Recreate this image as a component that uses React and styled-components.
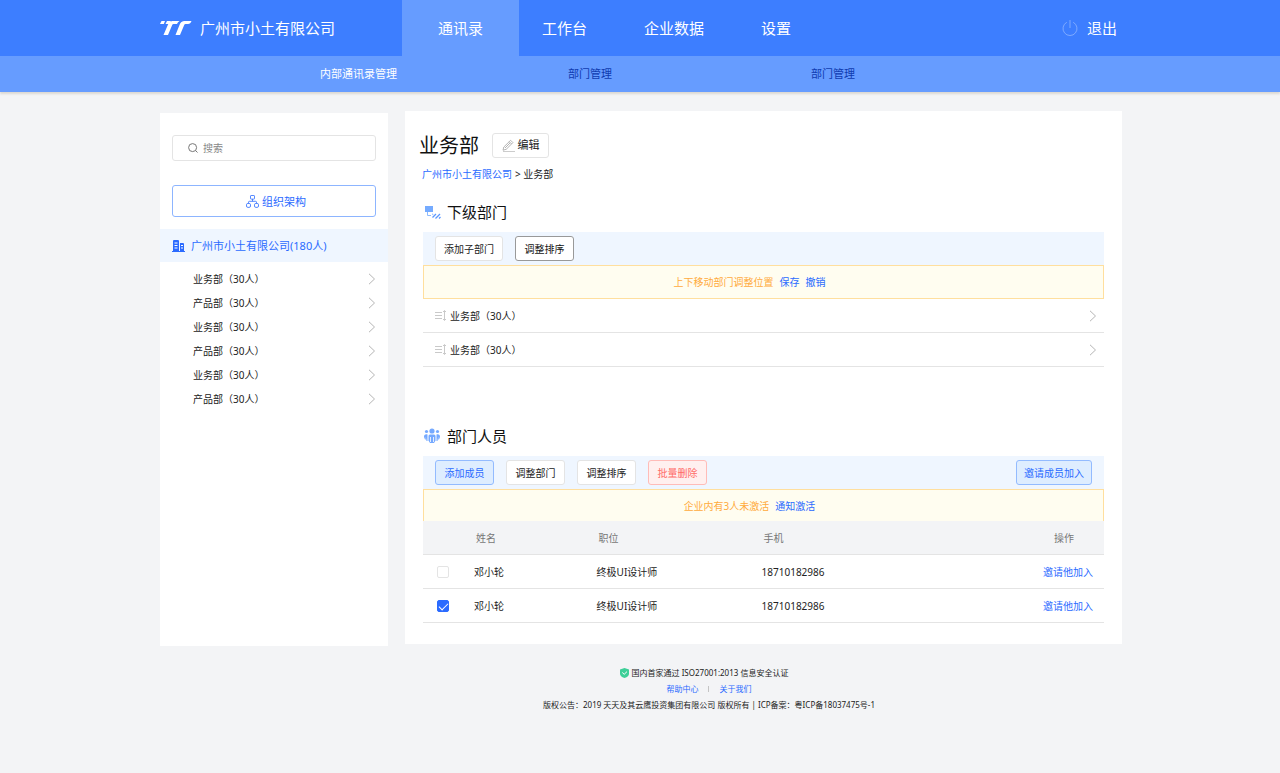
import React from 'react'
import styled, { createGlobalStyle } from 'styled-components'

const colors = {
    white: '#ffffff',
    page: '#f3f4f6',
    primary: '#3d7eff',
    primaryLight: '#669cff',
    link: '#2b6bff',
    navDim: '#0f3bb0',
    pale: '#eff6ff',
    notice: '#fffdf0',
    noticeBorder: '#ffdf9e',
    orange: '#ffab3d',
    text: '#222222',
    muted: '#777777',
    line: '#e4e4e4'
}

const GlobalStyle = createGlobalStyle`
    *{
        box-sizing:border-box;
    }
    body{
        margin:0;
        background:${colors.page};
        color:${colors.text};
        font-family:"Noto Sans", "Noto Sans CJK SC", sans-serif;
        font-size:10px;
        line-height:16px;
    }
    button, input{
        font-family:inherit;
    }
    a{
        color:inherit;
        text-decoration:none;
    }
    h1, h2, ul, p{
        margin:0;
        padding:0;
        font-weight:400;
    }
    ul{
        list-style:none;
    }
    svg{
        display:block;
        flex:none;
    }
`;

const Header = styled.header`
    display:flex;
    height:56px;
    padding:0 163px 0 160px;
    background:${colors.primary};
    color:${colors.white};
    font-size:15px;
    line-height:20px;
`;
const Brand = styled.div`
    display:flex;
    align-items:center;
    gap:8px;
    width:242px;
`;
const Nav = styled.nav`
    display:flex;
    flex:1;
    gap:57px;
`;
const NavLink = styled.a`
    display:flex;
    align-items:center;
    justify-content:center;
    ${props => props.$active && `
        width:117px;
        margin-right:-34px;
        background:${colors.primaryLight};
    `}
`;
const Logout = styled.button`
    display:flex;
    align-items:center;
    gap:9px;
    padding:0;
    border:0;
    background:none;
    color:inherit;
    font-size:15px;
    line-height:20px;
`;
const SubNav = styled.nav`
    display:grid;
    grid-template-columns:248px 243px 1fr;
    align-items:center;
    height:36px;
    padding:0 160px 0 320px;
    background:${colors.primaryLight};
    box-shadow:0 2px 2px #dbd8d3;
    font-size:11px;
`;
const SubLink = styled.a`
    color:${props => props.$active ? colors.white : colors.navDim};
`;

const Main = styled.main`
    display:flex;
    align-items:stretch;
    gap:17px;
    padding:19px 158px 0 160px;
`;
const Sidebar = styled.aside`
    flex:0 0 228px;
    margin:2px 0 0;
    background:${colors.white};
`;
const Controls = styled.div`
    display:flex;
    flex-direction:column;
    gap:24px;
    padding:22px 12px 12px;
`;
const SearchBox = styled.label`
    display:flex;
    align-items:center;
    gap:5px;
    height:26px;
    padding:0 15px;
    border:1px solid ${colors.line};
    border-radius:3px;

    & input{
        flex:1;
        min-width:0;
        padding:0;
        border:0;
        outline:0;
        font-size:10px;
        line-height:16px;
    }
    & input::placeholder{
        color:#888888;
        opacity:1;
    }
`;
const OrgButton = styled.button`
    display:flex;
    align-items:center;
    justify-content:center;
    gap:3px;
    height:32px;
    padding:0 4px 0 8px;
    border:1px solid #8db5ff;
    border-radius:3px;
    background:${colors.white};
    color:${colors.link};
    font-size:11px;
`;
const Company = styled.a`
    display:flex;
    align-items:center;
    gap:6px;
    height:33px;
    padding:0 12px;
    background:${colors.pale};
    color:${colors.link};
    font-size:11px;
`;
const DeptList = styled.ul`
    padding:5px 12px 0 33px;
`;
const DeptLink = styled.a`
    display:flex;
    align-items:center;
    justify-content:space-between;
    height:24px;
`;

const Panel = styled.section`
    flex:1;
    min-width:0;
    margin-bottom:2px;
    padding:20px 18px 21px;
    background:${colors.white};
`;
const TitleRow = styled.div`
    display:flex;
    align-items:center;
    gap:13px;
    margin-left:-4px;

    & h1{
        padding-top:2px;
        color:#111111;
        font-size:20px;
        line-height:26px;
    }
`;
const Breadcrumb = styled.nav`
    display:flex;
    gap:3px;
    margin:7px 0 0 -1px;

    & a{
        color:${colors.link};
    }
`;
const SectionTitle = styled.h2`
    display:flex;
    align-items:center;
    gap:6px;
    height:24px;
    margin:${props => props.$second ? '57px' : '18px'} 0 8px;
    color:#111111;
    font-size:15px;
    line-height:20px;
`;
const Toolbar = styled.div`
    display:flex;
    align-items:center;
    gap:12px;
    height:33px;
    padding:0 12px;
    background:${colors.pale};
`;
const tones = {
    plain: `border-color:${colors.line};background:${colors.white};color:${colors.text};`,
    dark: `border-color:#999999;background:${colors.white};color:#111111;`,
    blue: `border-color:#93bbff;background:#deedff;color:${colors.link};`,
    red: `border-color:#ffbcb8;background:#fff0ef;color:#ff6c67;`
}
const Button = styled.button`
    display:flex;
    align-items:center;
    justify-content:center;
    gap:3px;
    height:25px;
    min-width:${props => props.$wide ? '76px' : '59px'};
    padding:0 ${props => props.$wide ? '7px' : '8px'};
    border:1px solid;
    border-radius:3px;
    font-size:10px;
    line-height:16px;
    ${props => tones[props.$tone || 'plain']}
    ${props => props.$end && 'margin-left:auto;'}
`;
const EditButton = styled(Button)`
    min-width:57px;
    font-size:11px;
`;
const Notice = styled.div`
    display:flex;
    align-items:center;
    justify-content:center;
    gap:6px;
    height:${props => props.$open ? '32px' : '34px'};
    padding-right:28px;
    border:1px solid ${colors.noticeBorder};
    ${props => props.$open && 'border-bottom:0;'}
    background:${colors.notice};
    color:${colors.orange};
`;
const TextLink = styled.a`
    color:${colors.link};
`;
const SortRow = styled.li`
    display:flex;
    align-items:center;
    gap:4px;
    height:34px;
    padding:0 7px 0 12px;
    border-bottom:1px solid ${colors.line};

    & svg:last-child{
        margin-left:auto;
    }
`;

const Table = styled.table`
    width:100%;
    table-layout:fixed;
    border-collapse:separate;
    border-spacing:0;

    & th, & td{
        height:34px;
        padding:0;
        border-bottom:1px solid ${colors.line};
        text-align:left;
        font-weight:400;
    }
    & th{
        padding-left:2px;
        background:${colors.page};
        color:${colors.muted};
    }
    & th:last-child{
        padding-right:30px;
    }
    & th:last-child, & td:last-child{
        text-align:right;
    }
    & td:last-child{
        padding-right:11px;
    }
    & td:first-child{
        padding-left:14px;
    }
`;
const Checkbox = styled.input`
    appearance:none;
    display:block;
    width:12px;
    height:12px;
    margin:0;
    border:1px solid ${colors.line};
    border-radius:2px;
    background:${colors.white};

    &:checked{
        border-color:${colors.link};
        background:${colors.link};
    }
    &:checked::before{
        content:"";
        display:block;
        width:8px;
        height:4px;
        margin:2px 0 0 1px;
        border-left:1px solid ${colors.white};
        border-bottom:1px solid ${colors.white};
        transform:rotate(-45deg);
    }
`;

const Footer = styled.footer`
    display:flex;
    flex-direction:column;
    align-items:center;
    padding:19px 0 60px 138px;
    font-size:8px;

    & p{
        display:flex;
        align-items:center;
        gap:3px;
    }
    & p:first-child{
        padding-right:10px;
    }
`;
const FooterLinks = styled.p`
    color:${colors.link};

    & a:first-child{
        padding-right:6px;
    }
    & a:last-child{
        padding-left:8px;
    }
`;
const Divider = styled.span`
    width:1px;
    height:6px;
    background:#c4c4c4;
`;

const Logo = () => (
    <svg width="32" height="16" viewBox="0 0 32 16" fill="#fff">
        <path d="M1.500 1H5L3.800 4H0zM9 1H19.500Q17.800 1.800 17 4H13.500Q12.600 4 12.200 5L8 15H3.500L8 4.500Q9 1.500 12 1z"/>
        <path d="M7 1h4L9.500 4H5.500zM21.500 1H31.500Q30.500 4 28 4H25.500Q24.600 4 24.200 5L20 15H15.500L19.500 5Q20.500 1.500 24 1z"/>
    </svg>
)
const PowerIcon = () => (
    <svg width="16" height="18" viewBox="0 0 16 18" fill="none" stroke="#7eaaff">
        <path d="M8 1v8M4.800 3.300a7 7 0 1 0 6.400 0"/>
    </svg>
)
const SearchIcon = () => (
    <svg width="10" height="10" viewBox="0 0 10 10" fill="none" stroke="#777">
        <circle cx="4.600" cy="4.600" r="4"/>
        <path d="M7.500 7.500l2 2"/>
    </svg>
)
const OrgIcon = () => (
    <svg width="13" height="13" viewBox="0 0 13 13" fill="none" stroke={colors.link} strokeWidth=".8">
        <rect x="4.500" y=".5" width="4" height="3.600" rx=".6"/>
        <path d="M6.500 4.100v2.200M2.500 8.400V7.200q0-.9.900-.9h6.200q.9 0 .9.900v1.200"/>
        <rect x=".5" y="8.400" width="4" height="4" rx="1.400"/>
        <rect x="8.500" y="8.400" width="4" height="4" rx="1.400"/>
    </svg>
)
const BuildingIcon = () => (
    <svg width="13" height="12" viewBox="0 0 13 12">
        <path fill={colors.link} d="M1 1q0-1 1-1h4q1 0 1 1v10h1V3h3q1 0 1 1v7h1v1H0v-1h1z"/>
        <path stroke="#fff" strokeWidth="1" d="M2.500 3h3M2.500 5.500h3M2.500 8h3M9 5.500h2M9 8h2"/>
    </svg>
)
const Chevron = () => (
    <svg width="8" height="12" viewBox="0 0 8 12" fill="none" stroke="#b5b5b5">
        <path d="M1 .8L6.500 6L1 11.200"/>
    </svg>
)
const PencilIcon = () => (
    <svg width="13" height="13" viewBox="0 0 13 13" fill="none" stroke="#aaa">
        <path d="M1 11.200l.8-3.200L8.600 1.300l2.300 2.300L4.200 10.300zM7.300 2.700l2.200 2.200M3 9l5-5" strokeWidth=".9"/>
        <path d="M1 12.500h12" stroke="#ccc"/>
    </svg>
)
const SubDeptIcon = () => (
    <svg width="18" height="14" viewBox="0 0 18 14">
        <path fill="#75abff" d="M2 1h8v6H2z"/>
        <path fill="none" stroke="#8dbaff" d="M4.500 7v3.500H8"/>
        <path fill="none" stroke="#5b98ff" strokeWidth="1.300" d="M9.500 12.500L13 9M12.500 13.500L17 9M16 13.500l1.500-1.500M9.500 9.500l.5-.5"/>
    </svg>
)
const PeopleIcon = () => (
    <svg width="18" height="16" viewBox="0 0 18 16" fill="#75a9ff">
        <circle cx="9" cy="3" r="2.600"/>
        <circle cx="3.500" cy="3.500" r="1.600"/>
        <circle cx="14.500" cy="3.500" r="1.600"/>
        <path d="M5.500 8q0-1.500 1.500-1.500h4q1.500 0 1.500 1.500v4.500l-1.500 2.500H7l-1.500-2.500z"/>
        <path d="M4.500 6.500C2 6 1 7 1 9l1 2.500h.8v-3l.7 4.500h1zM13.500 6.500C16 6 17 7 17 9l-1 2.500h-.8v-3l-.7 4.500h-1z"/>
        <path stroke="#fff" strokeWidth=".8" d="M7.500 9v5M10.500 9v5"/>
    </svg>
)
const SortIcon = () => (
    <svg width="11" height="11" viewBox="0 0 11 11" fill="none" stroke="#bbb">
        <path d="M0 2.500h7M0 5.500h7M0 8.500h7M9.500 1v9M8 2l1.500-1.500L11 2M8 9l1.500 1.500L11 9" strokeWidth=".8"/>
    </svg>
)
const ShieldIcon = () => (
    <svg width="9" height="10" viewBox="0 0 9 10">
        <path fill="#3dcf98" d="M4.500 0L9 1.500v4Q9 8.500 4.500 10 0 8.500 0 5.500v-4z"/>
        <path fill="none" stroke="#fff" d="M2.300 4.500l1.900 1.800L7 3.600"/>
    </svg>
)

const departments = ['业务部', '产品部', '业务部', '产品部', '业务部', '产品部']
const subDepartments = ['业务部', '业务部']
const members = [
    { id: 1, name: '邓小轮', job: '终极UI设计师', phone: '18710182986', checked: false },
    { id: 2, name: '邓小轮', job: '终极UI设计师', phone: '18710182986', checked: true }
]

const NameCol = styled.col`
    width:18%;
`;
const CheckCol = styled.col`
    width:51px;
`;
const JobCol = styled.col`
    width:165px;
`;
const ActionCol = styled.col`
    width:20%;
`;
const Members = () => (
    <Table>
        <colgroup>
            <CheckCol/>
            <NameCol/>
            <JobCol/>
            <col/>
            <ActionCol/>
        </colgroup>
        <thead>
            <tr>
                <th></th>
                <th>姓名</th>
                <th>职位</th>
                <th>手机</th>
                <th>操作</th>
            </tr>
        </thead>
        <tbody>
            {members.map(member => (
                <tr key={member.id}>
                    <td><Checkbox type="checkbox" aria-label={member.name} defaultChecked={member.checked}/></td>
                    <td>{member.name}</td>
                    <td>{member.job}</td>
                    <td>{member.phone}</td>
                    <td><TextLink href="#invite">邀请他加入</TextLink></td>
                </tr>
            ))}
        </tbody>
    </Table>
)

const App = () => (
    <>
        <GlobalStyle/>
        <Header>
            <Brand><Logo/>广州市小土有限公司</Brand>
            <Nav>
                <NavLink href="#contacts" $active>通讯录</NavLink>
                <NavLink href="#workbench">工作台</NavLink>
                <NavLink href="#data">企业数据</NavLink>
                <NavLink href="#settings">设置</NavLink>
            </Nav>
            <Logout type="button"><PowerIcon/>退出</Logout>
        </Header>
        <SubNav>
            <SubLink href="#internal" $active>内部通讯录管理</SubLink>
            <SubLink href="#departments">部门管理</SubLink>
            <SubLink href="#departments">部门管理</SubLink>
        </SubNav>
        <Main>
            <Sidebar>
                <Controls>
                    <SearchBox>
                        <SearchIcon/>
                        <input type="text" placeholder="搜索" aria-label="搜索"/>
                    </SearchBox>
                    <OrgButton type="button"><OrgIcon/>组织架构</OrgButton>
                </Controls>
                <Company href="#company"><BuildingIcon/>广州市小土有限公司(180人)</Company>
                <DeptList>
                    {departments.map((name, i) => (
                        <li key={i}>
                            <DeptLink href="#dept">{name}（30人）<Chevron/></DeptLink>
                        </li>
                    ))}
                </DeptList>
            </Sidebar>
            <Panel>
                <TitleRow>
                    <h1>业务部</h1>
                    <EditButton type="button"><PencilIcon/>编辑</EditButton>
                </TitleRow>
                <Breadcrumb>
                    <a href="#company">广州市小土有限公司</a>
                    <span>&gt; 业务部</span>
                </Breadcrumb>
                <SectionTitle><SubDeptIcon/>下级部门</SectionTitle>
                <Toolbar>
                    <Button type="button">添加子部门</Button>
                    <Button type="button" $tone="dark">调整排序</Button>
                </Toolbar>
                <Notice>
                    <span>上下移动部门调整位置</span>
                    <TextLink href="#save">保存</TextLink>
                    <TextLink href="#undo">撤销</TextLink>
                </Notice>
                <ul>
                    {subDepartments.map((name, i) => (
                        <SortRow key={i}><SortIcon/>{name}（30人）<Chevron/></SortRow>
                    ))}
                </ul>
                <SectionTitle $second><PeopleIcon/>部门人员</SectionTitle>
                <Toolbar>
                    <Button type="button" $tone="blue">添加成员</Button>
                    <Button type="button">调整部门</Button>
                    <Button type="button">调整排序</Button>
                    <Button type="button" $tone="red">批量删除</Button>
                    <Button type="button" $tone="blue" $wide $end>邀请成员加入</Button>
                </Toolbar>
                <Notice $open>
                    <span>企业内有3人未激活</span>
                    <TextLink href="#notify">通知激活</TextLink>
                </Notice>
                <Members/>
            </Panel>
        </Main>
        <Footer>
            <p><ShieldIcon/>国内首家通过 ISO27001:2013 信息安全认证</p>
            <FooterLinks>
                <a href="#help">帮助中心</a>
                <Divider/>
                <a href="#about">关于我们</a>
            </FooterLinks>
            <p>版权公告：2019 天天及其云鹰投资集团有限公司 版权所有 | ICP备案：粤ICP备18037475号-1</p>
        </Footer>
    </>
)

export default App
